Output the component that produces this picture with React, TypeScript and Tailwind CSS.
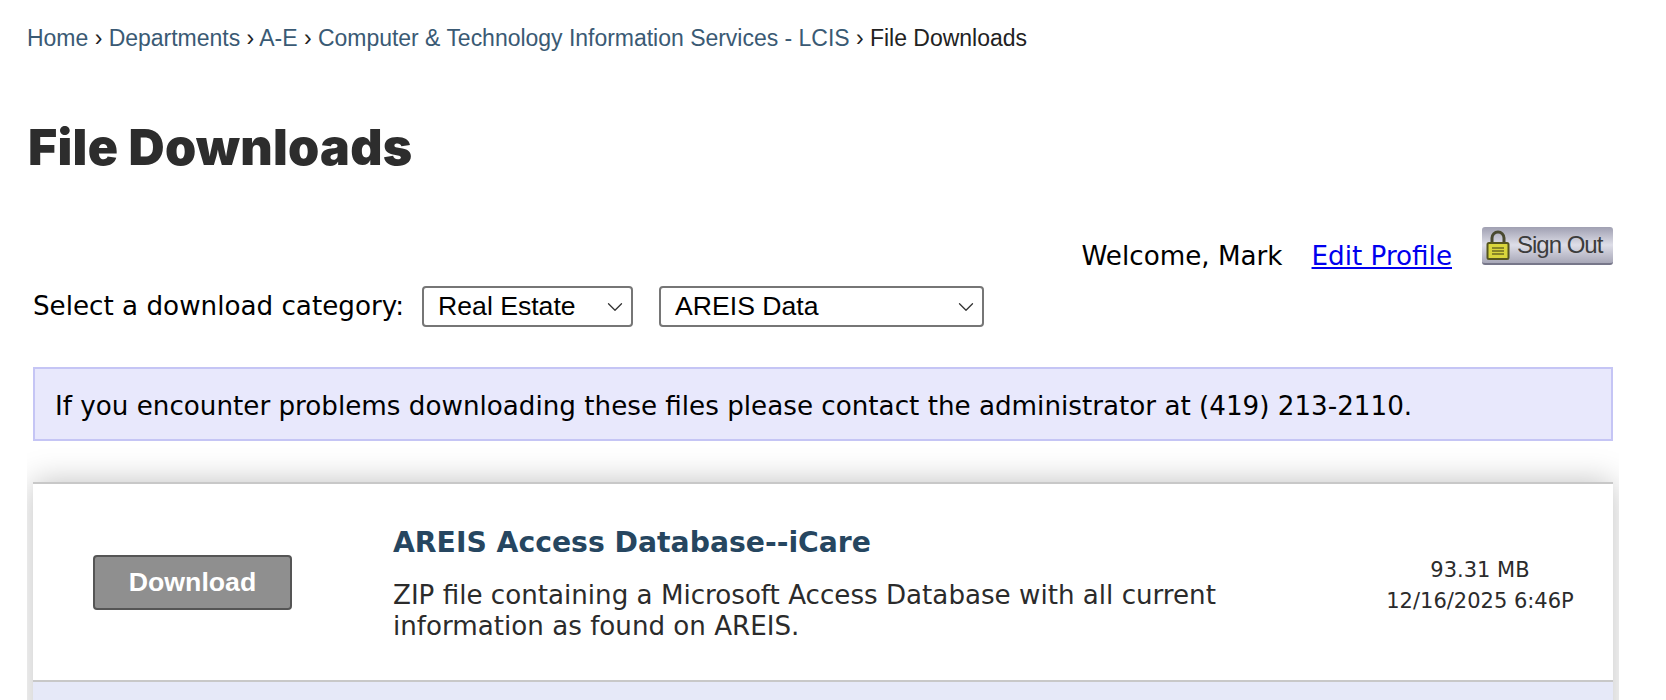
import { ChevronDown } from "lucide-react";

const crumbs = [
  "Home",
  "Departments",
  "A-E",
  "Computer & Technology Information Services - LCIS",
];

const verdana = "font-['DejaVu_Sans',Verdana,sans-serif]";

const Breadcrumbs = () => {
  return (
    <nav className="pl-[27px] pt-[24px] font-['Liberation_Sans',Arial,sans-serif] text-[23px] leading-[28px] tracking-[-0.02px] text-[#222222]">
      {crumbs.map((crumb) => (
        <span key={crumb}>
          <a href="#" className="text-[#3a5a74]">
            {crumb}
          </a>
          <span> › </span>
        </span>
      ))}
      <span>File Downloads</span>
    </nav>
  );
};

const FakeSelect = ({ label, width }: { label: string; width: string }) => {
  return (
    <div
      className={`flex h-[41px] items-center justify-between rounded-[4px] border-2 border-[#767676] bg-white pl-[14px] pr-[3px] font-['Liberation_Sans',Arial,sans-serif] text-[26.6px] text-black ${width}`}
    >
      <span>{label}</span>
      <ChevronDown size={26} strokeWidth={1.2} className="text-[#333333]" />
    </div>
  );
};

const LockIcon = () => {
  return (
    <svg width="26" height="32" viewBox="0 0 26 32">
      <path
        d="M7 15V9a6 6 0 0 1 12 0v6"
        fill="none"
        stroke="#4a4a30"
        strokeWidth="3"
      />
      <rect x="2.5" y="14" width="21" height="16" rx="1.5" fill="#d9d63c" stroke="#55551f" strokeWidth="2" />
      <path d="M7 19h12M7 22h12M7 25h12" stroke="#6d6c20" strokeWidth="1.5" />
    </svg>
  );
};

const SignOutButton = () => {
  return (
    <button className="flex h-[38px] w-[131px] items-center gap-[6px] rounded-[3px] border-b-2 border-b-[#77778a] bg-gradient-to-b from-[#a0a0b2] via-[#dedee8] to-[#a8a8b8] pl-[3px] font-['Liberation_Sans',Arial,sans-serif] text-[24px] tracking-[-1px] text-[#3c3c3c]">
      <LockIcon />
      <span>Sign Out</span>
    </button>
  );
};

const App = () => {
  return (
    <div className={`h-[700px] overflow-hidden bg-white ${verdana}`}>
      <Breadcrumbs />
      <h1 className="mt-[65px] pl-[28px] font-['Inter',sans-serif] text-[50px] font-black leading-[60px] tracking-[0.3px] text-[#2d2d2d]">
        File Downloads
      </h1>

      <div className="mt-[50px] flex h-[59px] items-start justify-end pr-[53px] text-[26.2px] text-black">
        <span className="mt-[14px] leading-[30px]">Welcome, Mark</span>
        <a href="#" className="ml-[29px] mt-[14px] leading-[30px] text-[#0000ee] underline">
          Edit Profile
        </a>
        <div className="ml-[30px]">
          <SignOutButton />
        </div>
      </div>

      <div className="ml-[33px] flex items-center gap-[26px] text-[26.2px] text-black">
        <div className="flex items-center gap-[18px]">
          <span>Select a download category:</span>
          <FakeSelect label="Real Estate" width="w-[211px]" />
        </div>
        <FakeSelect label="AREIS Data" width="w-[325px]" />
      </div>

      <div className="ml-[33px] mt-[40px] flex h-[74px] w-[1580px] items-center border-2 border-[#c5c5f5] bg-[#e8e8fc] pl-[20px] pt-[5px] text-[26.2px] text-black">
        If you encounter problems downloading these files please contact the administrator at (419) 213-2110.
      </div>

      <div className="ml-[27px] w-[1592px] overflow-hidden px-[6px] pt-[41px]">
        <div className="border-t-2 border-[#c8c8c8] bg-white shadow-[0_0_30px_rgba(0,0,0,0.25)]">
          <div className="flex h-[196px] items-center">
            <div className="flex w-[360px] shrink-0 pl-[60px]">
              <button className="h-[55px] w-[199px] rounded-[4px] border-2 border-[#555555] bg-[#8f8f8f] font-['Liberation_Sans',Arial,sans-serif] text-[26.7px] font-bold text-white">
                Download
              </button>
            </div>
            <div className="w-[954px] shrink-0 pt-[4px]">
              <h2 className="text-[28.25px] font-bold leading-[34px] text-[#264660]">
                AREIS Access Database--iCare
              </h2>
              <p className="mt-[20px] text-[26.15px] leading-[31px] text-[#2b2b2b]">
                ZIP file containing a Microsoft Access Database with all current information as found on AREIS.
              </p>
            </div>
            <div className="flex-1 pt-[8px] text-center text-[21px] leading-[31px] text-[#2b2b2b]">
              <div>93.31 MB</div>
              <div>12/16/2025 6:46P</div>
            </div>
          </div>
          <div className="h-[100px] border-t-2 border-[#c8c8c8] bg-[#e6e9f8]" />
        </div>
      </div>
    </div>
  );
};

export default App;
